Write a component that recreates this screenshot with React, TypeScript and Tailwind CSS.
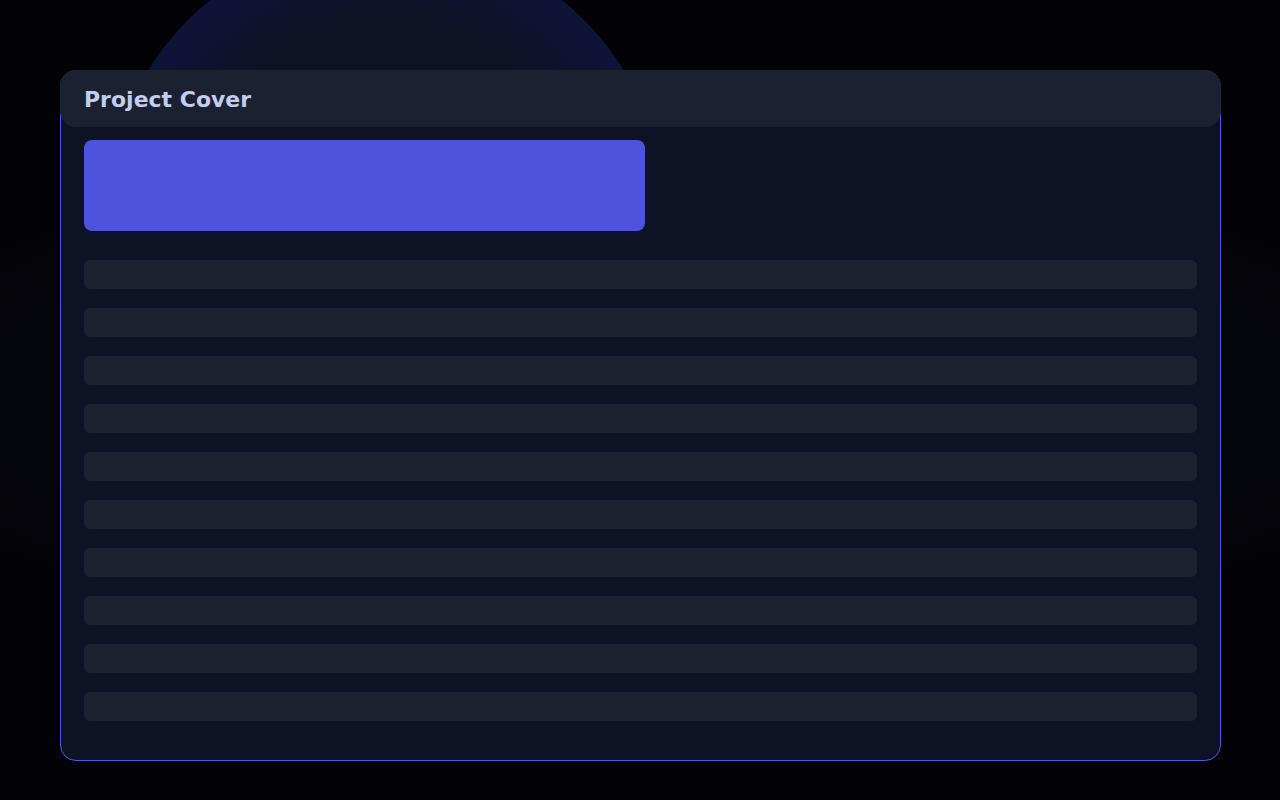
import React from "react";

export default function App() {
  const bars = Array.from({ length: 10 }, (_, i) => i);
  return (
    <div className="relative min-h-[800px] w-full overflow-hidden bg-[#030307] font-['DejaVu_Sans',sans-serif]">
      {/* background glows */}
      <div className="pointer-events-none absolute left-[106px] top-[-62px] h-[560px] w-[560px] rounded-full bg-[radial-gradient(circle,#0d1225_0%,#0d1225_50%,#10133a_72%,#141448_100%)]" />
      <div className="pointer-events-none absolute left-[-200px] top-[150px] h-[500px] w-[1680px] bg-[radial-gradient(ellipse_at_center,rgba(40,40,110,0.2)_0%,rgba(3,3,7,0)_70%)]" />

      <div className="relative pl-[60px] pt-[70px]">
        <div className="flex h-[691px] w-[1161px] flex-col rounded-2xl border border-[#5652f2] bg-[#0d1224]">
          <div className="-mx-px -mt-px flex h-[57px] items-center rounded-2xl bg-[#1b2131] px-[24px] pt-[2px]">
            <h1 className="text-[22px] font-bold leading-none text-[#c3cdf0]">Project Cover</h1>
          </div>
          <div className="flex flex-col px-[23px] pt-[13px]">
            <div className="h-[91px] w-[561px] rounded-lg bg-[#4f52dc]" />
            <div className="mt-[29px] flex flex-col gap-[19px]">
              {bars.map((i) => (
                <div key={i} className="h-[29px] w-full rounded-md bg-[#1d2231]" />
              ))}
            </div>
          </div>
        </div>
      </div>
    </div>
  );
}
